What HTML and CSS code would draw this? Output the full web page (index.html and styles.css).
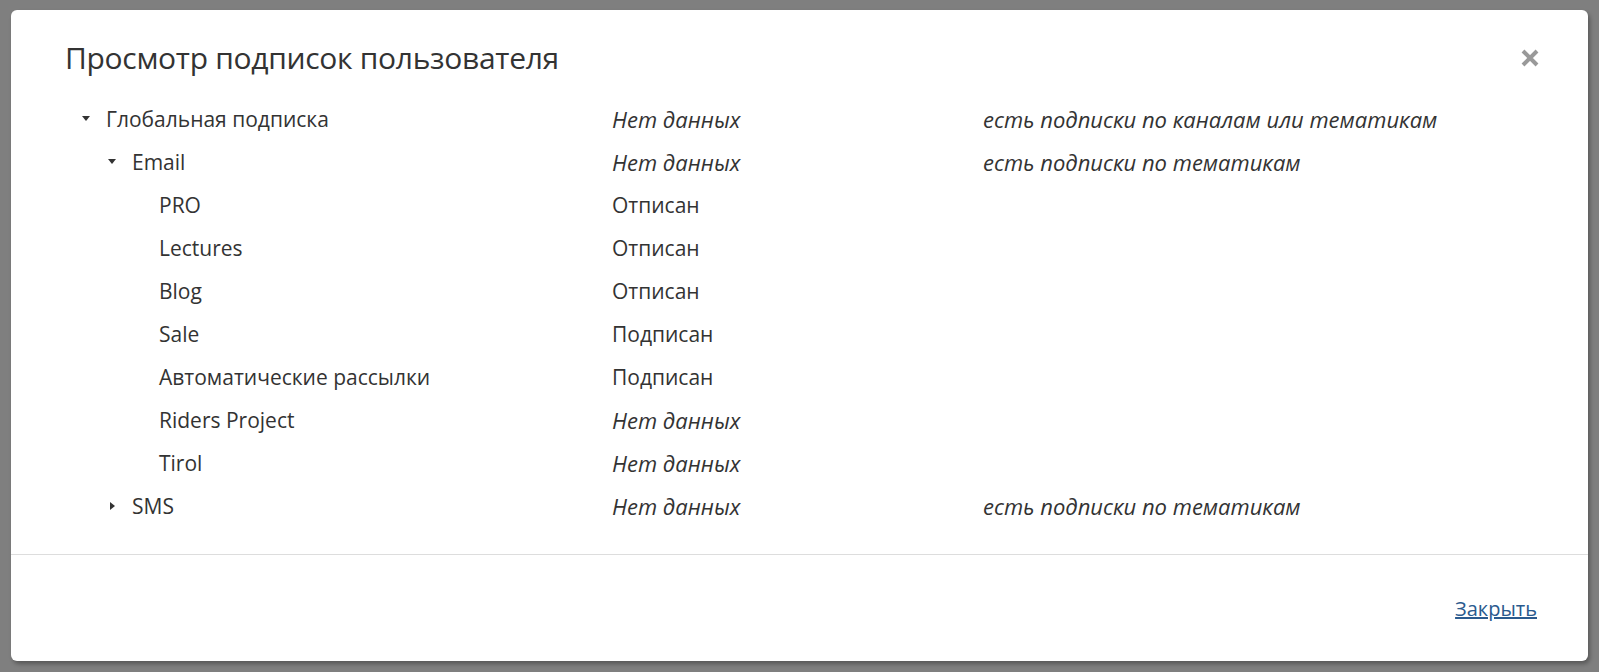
FILE: index.html
```html
<!DOCTYPE html>
<html lang="ru">
<head>
<meta charset="utf-8">
<title>Просмотр подписок пользователя</title>
<link rel="stylesheet" href="styles.css">
</head>
<body>
<div class="modal">
  <div class="modal-header">
    <h2 class="modal-title">Просмотр подписок пользователя</h2>
    <button class="close" type="button" aria-label="Закрыть">
      <svg width="20" height="20" viewBox="0 0 20 20"><path d="M3 3 L17 17 M17 3 L3 17" stroke="#999" stroke-width="4" stroke-linecap="butt"/></svg>
    </button>
  </div>
  <div class="modal-body">
    <div class="tree">
      <div class="row">
        <div class="name lvl0"><span class="tri down"></span>Глобальная подписка</div>
        <div class="status nodata">Нет данных</div>
        <div class="note">есть подписки по каналам или тематикам</div>
      </div>
      <div class="row">
        <div class="name lvl1"><span class="tri down"></span>Email</div>
        <div class="status nodata">Нет данных</div>
        <div class="note">есть подписки по тематикам</div>
      </div>
      <div class="row">
        <div class="name lvl2">PRO</div>
        <div class="status">Отписан</div>
        <div class="note"></div>
      </div>
      <div class="row">
        <div class="name lvl2">Lectures</div>
        <div class="status">Отписан</div>
        <div class="note"></div>
      </div>
      <div class="row">
        <div class="name lvl2">Blog</div>
        <div class="status">Отписан</div>
        <div class="note"></div>
      </div>
      <div class="row">
        <div class="name lvl2">Sale</div>
        <div class="status">Подписан</div>
        <div class="note"></div>
      </div>
      <div class="row">
        <div class="name lvl2">Автоматические рассылки</div>
        <div class="status">Подписан</div>
        <div class="note"></div>
      </div>
      <div class="row">
        <div class="name lvl2">Riders Project</div>
        <div class="status nodata">Нет данных</div>
        <div class="note"></div>
      </div>
      <div class="row">
        <div class="name lvl2">Tirol</div>
        <div class="status nodata">Нет данных</div>
        <div class="note"></div>
      </div>
      <div class="row">
        <div class="name lvl1"><span class="tri right"></span>SMS</div>
        <div class="status nodata">Нет данных</div>
        <div class="note">есть подписки по тематикам</div>
      </div>
    </div>
  </div>
  <div class="modal-footer">
    <a class="link" href="#">Закрыть</a>
  </div>
</div>
</body>
</html>
```

FILE: styles.css
```css
html, body {
  margin: 0;
  padding: 0;
  background: #7f7f7f;
  height: 100%;
}
body {
  font-family: "Open Sans", "Noto Sans", sans-serif;
  color: #333;
  padding: 10px 0 0 11px;
  box-sizing: border-box;
}
.modal {
  width: 1577px;
  height: 651px;
  background: #fff;
  border-radius: 6px;
  box-shadow: 2px 3px 4px rgba(0,0,0,0.3);
  display: flex;
  flex-direction: column;
}
.modal-header {
  display: flex;
  align-items: center;
  justify-content: space-between;
  padding: 26px 48px 0 54px;
  height: 42px;
}
.modal-title {
  margin: 0;
  font-weight: 400;
  font-size: 30px;
  color: #333;
  letter-spacing: -0.3px;
}
.close {
  border: 0;
  background: none;
  padding: 0;
  width: 20px;
  height: 20px;
  margin-top: 2px;
  cursor: pointer;
}
.close svg { display: block; }
.modal-body {
  padding: 19px 0 0 71px;
  flex: 1;
}
.tree {
  display: flex;
  flex-direction: column;
}
.row {
  display: grid;
  grid-template-columns: 530px 371px 1fr;
  height: 43px;
  align-items: center;
  font-size: 21px;
}
.name {
  display: flex;
  align-items: center;
}
.lvl0 { padding-left: 0; }
.lvl1 { padding-left: 26px; }
.lvl2 { padding-left: 77px; }
.tri {
  display: inline-block;
  width: 0;
  height: 0;
  margin-right: 16px;
}
.tri.down {
  border-left: 4px solid transparent;
  border-right: 4px solid transparent;
  border-top: 5px solid #333;
}
.tri.right {
  border-top: 4px solid transparent;
  border-bottom: 4px solid transparent;
  border-left: 5px solid #333;
  margin-left: 2px;
  margin-right: 17px;
}
.nodata, .note {
  font-style: italic;
  font-size: 22px;
}
.modal-footer {
  border-top: 1px solid #ddd;
  height: 107px;
  display: flex;
  align-items: center;
  justify-content: flex-end;
  padding: 0 51px 0 0;
  box-sizing: border-box;
}
.link {
  color: #2a5a8e;
  font-size: 20px;
  text-decoration: underline;
}
```
